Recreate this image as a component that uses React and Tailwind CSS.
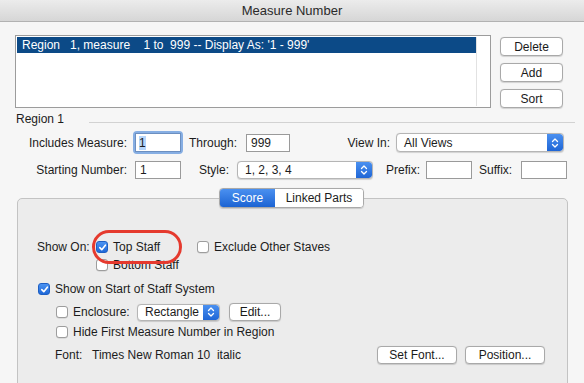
import React from 'react';

const Check = ({ checked }) => (
  checked ? (
    <span className="w-[12px] h-[12px] rounded-[3px] bg-gradient-to-b from-[#4b93f2] to-[#1e68d8] border border-[#1d5fc4] flex items-center justify-center shrink-0">
      <svg width="9" height="9" viewBox="0 0 10 10">
        <path d="M2 5.2 L4.2 7.4 L8.2 2.4" fill="none" stroke="#fff" strokeWidth="1.8" strokeLinecap="round" strokeLinejoin="round" />
      </svg>
    </span>
  ) : (
    <span className="w-[12px] h-[12px] rounded-[3px] bg-white border border-[#9d9d9d] shadow-[0_0.5px_0.5px_rgba(0,0,0,0.15)] shrink-0"></span>
  )
);

const Stepper = () => (
  <span className="w-[16px] h-full rounded-r-[3px] bg-gradient-to-b from-[#4a90f0] to-[#1f66d6] flex items-center justify-center shrink-0">
    <svg width="8" height="12" viewBox="0 0 8 12">
      <path d="M1.5 4.5 L4 2 L6.5 4.5" fill="none" stroke="#fff" strokeWidth="1.3" strokeLinecap="round" strokeLinejoin="round" />
      <path d="M1.5 7.5 L4 10 L6.5 7.5" fill="none" stroke="#fff" strokeWidth="1.3" strokeLinecap="round" strokeLinejoin="round" />
    </svg>
  </span>
);

const Popup = ({ label, className }) => (
  <div className={`flex items-center bg-white border border-[#b5b5b5] rounded-[4px] shadow-[0_0.5px_1px_rgba(0,0,0,0.15)] overflow-hidden ${className}`}>
    <span className="flex-1 pl-[7px] whitespace-nowrap">{label}</span>
    <Stepper />
  </div>
);

const Button = ({ label, className }) => (
  <button className={`bg-white border border-[#a9a9a9] rounded-[4px] shadow-[0_0.5px_1px_rgba(0,0,0,0.15)] flex items-center justify-center text-[12px] leading-none text-[#1a1a1a] ${className}`}>
    {label}
  </button>
);

const Field = ({ value, className }) => (
  <div className={`bg-white border border-[#9a9a9a] flex items-center pl-[4px] ${className}`}>{value}</div>
);

const App = () => {
  return (
    <div className="w-[584px] h-[383px] overflow-hidden bg-[#f6f6f6] text-[12px] text-[#1c1c1c] font-['Liberation_Sans',Arial,sans-serif]">
      {/* Title bar */}
      <div className="h-[22px] bg-gradient-to-b from-[#ececec] to-[#d6d6d6] border-b border-[#b2b2b2] flex items-center justify-center text-[13px] text-[#2a2a2a]">
        Measure Number
      </div>

      {/* Region list + buttons */}
      <div className="flex pl-[15px] pt-[13px]">
        <div className="w-[476px] h-[73px] bg-white border border-[#9c9c9c] flex p-[1px]">
          <div className="flex-1">
            <div className="h-[16px] bg-[#0c4a87] text-white flex items-center pl-[5px] whitespace-pre">
              {"Region   1, measure    1 to  999 -- Display As: '1 - 999'"}
            </div>
          </div>
          <div className="w-[13px] border-l border-[#e2e2e2] bg-white"></div>
        </div>
        <div className="flex flex-col gap-[7px] ml-[9px] pt-[2px]">
          <Button label="Delete" className="w-[63px] h-[19px]" />
          <Button label="Add" className="w-[63px] h-[19px]" />
          <Button label="Sort" className="w-[63px] h-[19px]" />
        </div>
      </div>

      {/* Region 1 separator */}
      <div className="flex items-center h-[18px] mt-[2px] pl-[16px] pr-[9px]">
        <span className="text-[12px]">Region 1</span>
        <div className="flex-1 h-px bg-[#d2d2d2] ml-[25px] mt-[6px]"></div>
      </div>

      {/* Row 1 */}
      <div className="flex items-center h-[23px] mt-[3px]">
        <span className="w-[127px] text-right whitespace-nowrap">Includes Measure:</span>
        <div className="ml-[6px] w-[50px] h-[23px] rounded-[4px] bg-[#86aee3] p-[2px]">
          <div className="w-full h-full bg-white border border-[#6c8fc0] flex items-center pl-[3px]">
            <span className="bg-[#b5d5fb] leading-[14px]">1</span>
          </div>
        </div>
        <span className="ml-[6px] w-[46px] whitespace-nowrap">Through:</span>
        <Field value="999" className="ml-[11px] w-[44px] h-[18px]" />
        <span className="w-[100px] text-right whitespace-nowrap">View In:</span>
        <Popup label="All Views" className="ml-[6px] w-[168px] h-[19px]" />
      </div>

      {/* Row 2 */}
      <div className="flex items-center h-[18px] mt-[7px]">
        <span className="w-[127px] text-right whitespace-nowrap">Starting Number:</span>
        <Field value="1" className="ml-[8px] w-[46px] h-[18px]" />
        <span className="w-[48px] text-right whitespace-nowrap">Style:</span>
        <Popup label="1, 2, 3, 4" className="ml-[8px] w-[136px] h-[18px]" />
        <span className="ml-[13px] w-[32px] whitespace-nowrap">Prefix:</span>
        <Field value="" className="ml-[8px] w-[46px] h-[18px]" />
        <span className="ml-[7px] w-[34px] whitespace-nowrap">Suffix:</span>
        <Field value="" className="ml-[8px] w-[46px] h-[18px]" />
      </div>

      {/* Tabs */}
      <div className="relative z-10 flex justify-center w-[584px] mt-[9px] pr-[1px]">
        <div className="flex h-[20px] rounded-[4px] border border-[#a9a9a9] overflow-hidden shadow-[0_0.5px_1px_rgba(0,0,0,0.15)]">
          <div className="w-[55px] bg-gradient-to-b from-[#4a90f0] to-[#1b63d3] text-white flex items-center justify-center">Score</div>
          <div className="w-[88px] bg-white flex items-center justify-center">Linked Parts</div>
        </div>
      </div>

      {/* Group box */}
      <div className="-mt-[10px] ml-[17px] w-[551px] h-[200px] bg-[#ececec] border border-[#c3c3c3] rounded-[5px] pl-[19px] pr-[22px] pt-[39px]">
        <div className="flex items-center h-[18px]">
          <span className="w-[59px] whitespace-nowrap">Show On:</span>
          <div className="relative w-[101px] flex items-center">
            <Check checked />
            <span className="ml-[5px]">Top Staff</span>
            <div className="absolute -left-[4px] -top-[8px] w-[90px] h-[34px] rounded-full border-[3px] border-[#e53a2e]"></div>
          </div>
          <Check />
          <span className="ml-[5px] whitespace-nowrap">Exclude Other Staves</span>
        </div>
        <div className="flex items-center h-[18px] pl-[59px]">
          <Check />
          <span className="ml-[5px]">Bottom Staff</span>
        </div>
        <div className="flex items-center h-[18px] mt-[6px] pl-[1px]">
          <Check checked />
          <span className="ml-[5px] whitespace-nowrap">Show on Start of Staff System</span>
        </div>
        <div className="flex items-center h-[20px] mt-[4px] pl-[19px]">
          <Check />
          <span className="ml-[5px] w-[64px] whitespace-nowrap">Enclosure:</span>
          <Popup label="Rectangle" className="w-[83px] h-[17px]" />
          <Button label="Edit..." className="ml-[9px] w-[52px] h-[18px]" />
        </div>
        <div className="flex items-center h-[18px] mt-[1px] pl-[19px]">
          <Check />
          <span className="ml-[5px] whitespace-nowrap">Hide First Measure Number in Region</span>
        </div>
        <div className="flex items-center h-[19px] mt-[4px] pl-[18px]">
          <span className="w-[37px]">Font:</span>
          <span className="whitespace-pre">{"Times New Roman 10  italic"}</span>
          <div className="ml-auto flex gap-[8px]">
            <Button label="Set Font..." className="w-[80px] h-[18px]" />
            <Button label="Position..." className="w-[80px] h-[18px]" />
          </div>
        </div>
      </div>
    </div>
  );
};

export default App;
